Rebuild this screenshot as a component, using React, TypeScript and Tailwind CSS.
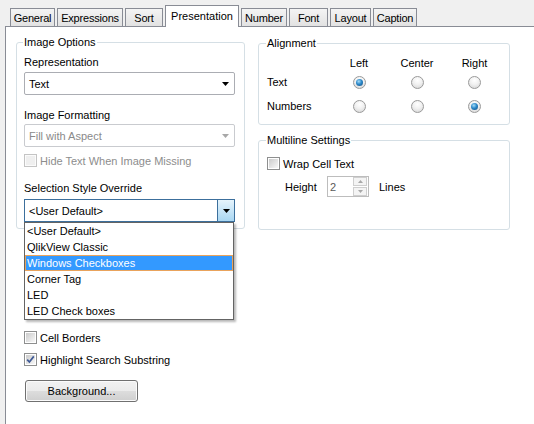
import type { ReactNode } from 'react';

// Properties dialog, "Presentation" tab (Windows 7 look)

const tabsLeft = [
  { label: 'General', cls: 'w-[45px]' },
  { label: 'Expressions', cls: 'ml-[2px] w-[66px]' },
  { label: 'Sort', cls: 'ml-[2px] w-[38px]' },
];

const tabsRight = [
  { label: 'Number', cls: 'ml-[2px] w-[46px]' },
  { label: 'Font', cls: 'ml-[2px] w-[39px]' },
  { label: 'Layout', cls: 'ml-[2px] w-[41px]' },
  { label: 'Caption', cls: 'ml-[2px] w-[44px]' },
];

const styleOptions = ['<User Default>', 'QlikView Classic', 'Windows Checkboxes', 'Corner Tag', 'LED', 'LED Check boxes'];

const Arrow = ({ color = '#000' }: { color?: string }) => (
  <svg width="7" height="4" viewBox="0 0 7 4">
    <path d="M0 0h7L3.5 4z" fill={color} />
  </svg>
);

const Tab = ({ label, cls }: { label: string; cls: string }) => (
  <div
    className={`flex h-[18px] items-center justify-center whitespace-nowrap border border-b-0 border-[#898c95] bg-linear-to-b from-[#f4f4f4] to-[#e2e2e2] tracking-[-0.2px] ${cls}`}
  >
    {label}
  </div>
);

const CheckBox = ({ checked = false, disabled = false }: { checked?: boolean; disabled?: boolean }) => (
  <span
    className={`flex h-[13px] w-[13px] shrink-0 border p-[1px] ${
      disabled ? 'border-[#c4c4c4] bg-[#fbfbfb]' : 'border-[#8e8f8f] bg-white'
    }`}
  >
    <span
      className={`relative block h-full w-full ${
        disabled ? 'bg-[#efefef]' : 'bg-linear-to-br from-[#cbcbcb] to-[#f8f8f8]'
      }`}
    >
      {checked && (
        <svg className="absolute left-0 top-0" width="9" height="9" viewBox="0 0 9 9">
          <path d="M1.2 4.6 3.4 7 7.8 1.4" stroke="#3f5a96" strokeWidth="1.7" fill="none" />
        </svg>
      )}
    </span>
  </span>
);

const CheckRow = ({
  label,
  checked,
  disabled,
  className = '',
}: {
  label: string;
  checked?: boolean;
  disabled?: boolean;
  className?: string;
}) => (
  <div className={`flex h-[13px] items-center ${className}`}>
    <CheckBox checked={checked} disabled={disabled} />
    <span className={`ml-[3px] ${disabled ? 'text-[#8d8d8d]' : ''}`}>{label}</span>
  </div>
);

const Radio = ({ on = false }: { on?: boolean }) => (
  <span className="flex h-[13px] w-[13px] items-center justify-center rounded-full border border-[#9a9a9a] bg-[radial-gradient(circle_at_50%_30%,#ffffff_0%,#f1f1f1_45%,#d2d2d2_100%)]">
    {on && (
      <span className="h-[7px] w-[7px] rounded-full bg-[radial-gradient(circle_at_40%_35%,#a6dcf7_0%,#2b88c9_45%,#13497a_100%)]" />
    )}
  </span>
);

const GroupBox = ({ title, className, children }: { title: string; className: string; children: ReactNode }) => (
  <fieldset className={`rounded-[3px] border border-[#d5dfe5] ${className}`}>
    <legend className="-ml-px px-px leading-[14px]">{title}</legend>
    {children}
  </fieldset>
);

export default function App() {
  return (
    <div className="flex h-[424px] w-[534px] flex-col overflow-hidden bg-[#f0f0f0] font-['Liberation_Sans',Arial,sans-serif] text-[11px] leading-[14px] text-black">
      {/* tab strip */}
      <div className="flex h-[26px] items-end pl-[10px]">
        {tabsLeft.map((t) => (
          <Tab key={t.label} {...t} />
        ))}
        <div className="relative z-10 -mb-px ml-[2px] flex h-[22px] w-[74px] items-center justify-center border border-b-0 border-[#898c95] bg-white pb-[2px]">
          Presentation
        </div>
        {tabsRight.map((t) => (
          <Tab key={t.label} {...t} />
        ))}
      </div>

      {/* page */}
      <div className="ml-[5px] flex flex-1 border-l border-t border-[#898c95] bg-white pl-[10px]">
        {/* left column */}
        <div className="flex w-[229px] flex-col pt-[8px]">
          <GroupBox title="Image Options" className="pb-[6px] pl-[7px] pr-[9px]">
            <div className="mt-[6px]">Representation</div>
            <div className="mt-[3px] flex h-[23px] items-center justify-between rounded-[2px] border border-[#abadb3] bg-white pl-[4px] pr-[5px]">
              <span>Text</span>
              <Arrow />
            </div>

            <div className="mt-[13px]">Image Formatting</div>
            <div className="mt-[2px] flex h-[23px] items-center justify-between rounded-[2px] border border-[#c9cbcf] bg-white pl-[4px] pr-[5px] text-[#8a8a8a]">
              <span>Fill with Aspect</span>
              <Arrow color="#a8a8a8" />
            </div>

            <CheckRow label="Hide Text When Image Missing" disabled className="mt-[7px]" />

            <div className="mt-[14px]">Selection Style Override</div>
            <div className="relative mt-[4px]">
              <div className="flex h-[23px] items-stretch border border-[#3c6f9c] bg-white">
                <span className="flex flex-1 items-center pl-[4px]">&lt;User Default&gt;</span>
                <span className="flex w-[17px] items-center justify-center border-l border-[#3c6f9c] bg-linear-to-b from-[#e6f4fc] to-[#a9d7f2]">
                  <Arrow />
                </span>
              </div>
              {/* open list */}
              <div className="absolute left-0 top-full z-20 w-[210px] border border-[#646464] bg-white shadow-[2px_2px_2px_rgba(0,0,0,0.28)]">
                {styleOptions.map((o) =>
                  o === 'Windows Checkboxes' ? (
                    <div
                      key={o}
                      className="h-[16px] bg-[#3399ff] pl-[2px] leading-[16px] text-white shadow-[inset_0_0_0_1px_#e9a35c]"
                    >
                      {o}
                    </div>
                  ) : (
                    <div key={o} className="h-[16px] pl-[2px] leading-[16px]">
                      {o}
                    </div>
                  )
                )}
              </div>
            </div>
          </GroupBox>

          <div className="flex flex-col pl-[8px]">
            <CheckRow label="Cell Borders" className="mt-[102px]" />
            <CheckRow label="Highlight Search Substring" checked className="mt-[9px]" />
            <button className="ml-[1px] mt-[14px] h-[22px] w-[113px] rounded-[3px] border border-[#707070] bg-[linear-gradient(#f2f2f2_0%,#ebebeb_50%,#dddddd_50%,#cfcfcf_100%)] shadow-[inset_0_0_0_1px_#fbfbfb]">
              Background...
            </button>
          </div>
        </div>

        {/* right column */}
        <div className="ml-[13px] flex w-[252px] flex-col pt-[9px]">
          <GroupBox title="Alignment" className="pb-[6px] pl-[8px]">
            <div className="mt-[6px] grid grid-cols-[63px_58px_58px_57px] grid-rows-[14px_24px_24px] items-center">
              <span />
              <span className="text-center">Left</span>
              <span className="text-center">Center</span>
              <span className="text-center">Right</span>

              <span>Text</span>
              <span className="flex justify-center">
                <Radio on />
              </span>
              <span className="flex justify-center">
                <Radio />
              </span>
              <span className="flex justify-center">
                <Radio />
              </span>

              <span>Numbers</span>
              <span className="flex justify-center">
                <Radio />
              </span>
              <span className="flex justify-center">
                <Radio />
              </span>
              <span className="flex justify-center">
                <Radio on />
              </span>
            </div>
          </GroupBox>

          <GroupBox title="Multiline Settings" className="mt-[8px] pb-[32px] pl-[8px]">
            <CheckRow label="Wrap Cell Text" className="mt-[10px]" />
            <div className="mt-[6px] flex h-[21px] items-center pl-[18px]">
              <span className="w-[42px]">Height</span>
              <div className="flex h-[21px] w-[42px] items-center justify-between border border-[#bdbdbd] pl-[2px] pr-[1px] text-[#5a5a5a]">
                <span>2</span>
                <div className="flex flex-col gap-px">
                  <span className="flex h-[9px] w-[14px] items-center justify-center border border-[#cfcfcf] bg-[#f4f4f4]">
                    <svg width="5" height="3" viewBox="0 0 5 3">
                      <path d="M0 3h5L2.5 0z" fill="#a8a8a8" />
                    </svg>
                  </span>
                  <span className="flex h-[9px] w-[14px] items-center justify-center border border-[#cfcfcf] bg-[#f4f4f4]">
                    <svg width="5" height="3" viewBox="0 0 5 3">
                      <path d="M0 0h5L2.5 3z" fill="#a8a8a8" />
                    </svg>
                  </span>
                </div>
              </div>
              <span className="ml-[10px]">Lines</span>
            </div>
          </GroupBox>
        </div>
      </div>
    </div>
  );
}
